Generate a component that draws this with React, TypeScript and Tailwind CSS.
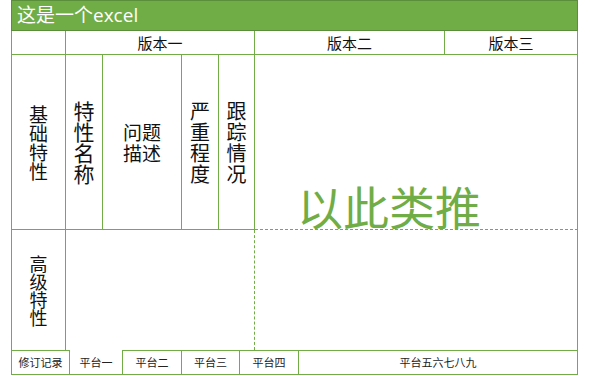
const ln = "border-[#70ad47]";

function Stack({ lines, className }: { lines: string[]; className: string }) {
  return (
    <div className={`text-center ${className}`}>
      {lines.map((l, i) => (
        <div key={i}>{l}</div>
      ))}
    </div>
  );
}

const tabs = [
  { label: "修订记录", w: "w-[58px]", active: false },
  { label: "平台一", w: "w-[53px]", active: true },
  { label: "平台二", w: "w-[59px]", active: false },
  { label: "平台三", w: "w-[58px]", active: false },
  { label: "平台四", w: "w-[59px]", active: false },
  { label: "平台五六七八九", w: "w-[279px]", active: false },
];

export default function App() {
  return (
    <div className="w-[590px] h-[376px] bg-white pl-[11px] font-['Noto_Sans_CJK_SC',sans-serif] text-[#111]">
      <div className="w-[567px]">
        <div className="h-[31px] bg-[#70ad47] border border-[#5b8e3a] flex items-center pl-[5px] text-white text-[19px] leading-none font-['Open_Sans','Noto_Sans_CJK_SC',sans-serif]">
          这是一个excel
        </div>

        <div className={`border-l ${ln}`}>
          {/* 版本 */}
          <div className={`flex h-[24px] border-b ${ln} text-[15px] leading-none`}>
            <div className={`w-[54px] border-r ${ln}`} />
            <div className={`w-[189px] border-r ${ln} flex items-center justify-center`}>版本一</div>
            <div className={`w-[190px] border-r ${ln} flex items-center justify-center`}>版本二</div>
            <div className={`w-[133px] border-r ${ln} flex items-center justify-center`}>版本三</div>
          </div>

          {/* 基础特性 */}
          <div className="flex h-[175px]">
            <div className={`w-[54px] border-r border-b ${ln} flex items-center justify-center`}>
              <Stack lines={["基", "础", "特", "性"]} className="text-[19px] leading-[19px]" />
            </div>
            <div className={`w-[37px] border-r border-b ${ln} flex items-center justify-center`}>
              <Stack lines={["特", "性", "名", "称"]} className="text-[21px] leading-[21px]" />
            </div>
            <div className={`w-[79px] border-r border-b ${ln} flex items-center justify-center`}>
              <Stack lines={["问题", "描述"]} className="text-[19px] leading-[21px]" />
            </div>
            <div className={`w-[37px] border-r border-b ${ln} flex items-center justify-center`}>
              <Stack lines={["严", "重", "程", "度"]} className="text-[20px] leading-[21px]" />
            </div>
            <div className={`w-[36px] border-r border-b ${ln} flex items-center justify-center`}>
              <Stack lines={["跟", "踪", "情", "况"]} className="text-[20px] leading-[21px]" />
            </div>
            <div className={`w-[323px] border-r border-b ${ln} [border-bottom-style:dashed] flex items-end pl-[42px] pb-[1px]`}>
              <span className="text-[46px] leading-none text-[#70ad47]">以此类推</span>
            </div>
          </div>

          {/* 高级特性 */}
          <div className="flex h-[120px]">
            <div className={`w-[54px] border-r ${ln} flex items-center justify-center`}>
              <Stack lines={["高", "级", "特", "性"]} className="text-[18px] leading-[18px]" />
            </div>
            <div className={`w-[189px] border-r border-dashed ${ln}`} />
            <div className={`w-[323px] border-r ${ln}`} />
          </div>

          {/* sheet tabs */}
          <div className="flex h-[25px] text-[11px] leading-none text-[#222]">
            {tabs.map((t) => (
              <div
                key={t.label}
                className={`${t.w} border-r border-b ${ln} ${t.active ? "" : "border-t"} flex items-center justify-center`}
              >
                {t.label}
              </div>
            ))}
          </div>
        </div>
      </div>
    </div>
  );
}
